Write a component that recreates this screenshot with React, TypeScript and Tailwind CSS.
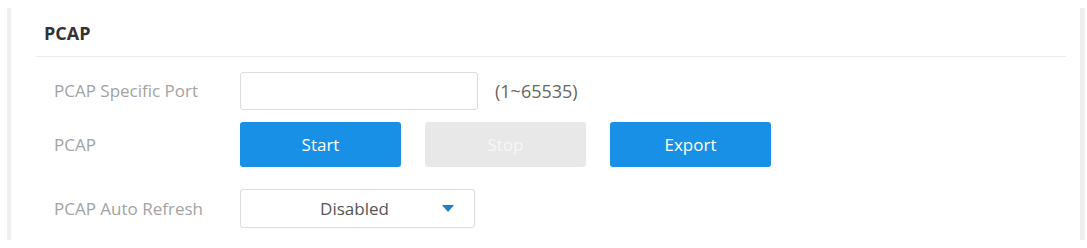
export default function App() {
  const labelCls = "w-[186px] shrink-0 text-[17px] text-[#a3a3a3]";

  return (
    <div
      className="w-[1087px] h-[248px] bg-white pt-[8px] pl-[7px] pr-[2px]"
      style={{ fontFamily: '"Open Sans", "Liberation Sans", sans-serif' }}
    >
      <div className="h-[232px] border-l-[4px] border-r-[5px] border-[#efefef]">
        {/* Header */}
        <div className="ml-[25px] mr-[14px] pl-[8px] pt-[15px] pb-[12px] border-b border-[#ebebeb]">
          <h3 className="text-[18px] leading-[21px] font-bold text-[#333]">PCAP</h3>
        </div>

        <div className="pl-[43px]">
          {/* Specific port */}
          <div className="flex items-center mt-[15px]">
            <span className={labelCls}>PCAP Specific Port</span>
            <input
              type="text"
              className="w-[238px] h-[38px] border border-[#dcdcdc] rounded-[3px] px-3 outline-none"
            />
            <span className="ml-[17px] text-[18px] text-[#666]">(1~65535)</span>
          </div>

          {/* Start / Stop / Export */}
          <div className="flex items-center mt-[12px]">
            <span className={labelCls}>PCAP</span>
            <div className="flex gap-[24px]">
              <button className="w-[161px] h-[45px] rounded-[3px] bg-[#1890e6] text-white text-[17px]">
                Start
              </button>
              <button className="w-[161px] h-[45px] rounded-[3px] bg-[#e8e8e8] text-[#f7f7f7] text-[17px]">
                Stop
              </button>
              <button className="w-[161px] h-[45px] rounded-[3px] bg-[#1890e6] text-white text-[17px]">
                Export
              </button>
            </div>
          </div>

          {/* Auto refresh */}
          <div className="flex items-center mt-[22px]">
            <span className={labelCls}>PCAP Auto Refresh</span>
            <div className="w-[235px] h-[39px] border border-[#dcdcdc] rounded-[3px] flex items-center pl-[26px] pr-[20px]">
              <span className="flex-1 text-center text-[17px] text-[#555]">Disabled</span>
              <svg width="12" height="7" viewBox="0 0 12 7">
                <path d="M0 0 L12 0 L6 7 Z" fill="#1a7fc6" />
              </svg>
            </div>
          </div>
        </div>
      </div>
    </div>
  );
}
